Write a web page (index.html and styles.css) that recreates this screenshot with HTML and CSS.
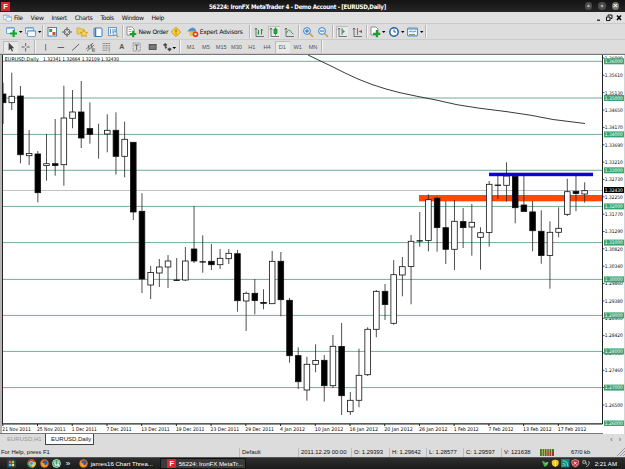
FILE: index.html
```html
<!DOCTYPE html>
<html lang="en">
<head>
  <meta charset="UTF-8">
  <meta name="viewport" content="width=device-width, initial-scale=1.0">
  <title>56224: IronFX MetaTrader 4 - Demo Account - [EURUSD,Daily]</title>
  <link rel="stylesheet" href="styles.css">
</head>
<body>
  <!-- shared icon pieces -->
  <svg class="defs" width="0" height="0">
    <symbol id="plus" viewBox="0 0 8 8"><path d="M3 0h2.4v2.8H8v2.4H5.4V8H3V5.2H0V2.8h3z" fill="#12a32a"/></symbol>
    <symbol id="win" viewBox="0 0 10 8"><rect x=".5" y=".5" width="9" height="7" rx=".7" fill="#f4f9ff" stroke="#5b8fc4"/><path d="M1 1.5h8" stroke="#7fb0de"/></symbol>
    <symbol id="fox" viewBox="0 0 10 10"><circle cx="5" cy="5" r="4.7" fill="#e8731a"/><circle cx="5.6" cy="4" r="2.7" fill="#2c5ea8"/><path d="M1 2q1 3 4 3q-1 2 3 2.400q-3 2.500-6 0z" fill="#f7a331"/></symbol>
  </svg>

  <header class="titlebar">
    <span class="logo">F</span>
    <h1>56224: IronFX MetaTrader 4 - Demo Account - [EURUSD,Daily]</h1>
    <div class="win-buttons"><i></i><i></i><i class="close">×</i></div>
  </header>

  <nav class="menubar">
    <svg class="menu-icon" viewBox="0 0 10 8"><use href="#win" width="7" height="6"/><use href="#win" x="3" y="2" width="7" height="6"/></svg>
    <span>File</span><span>View</span><span>Insert</span><span>Charts</span><span>Tools</span><span>Window</span><span>Help</span>
    <svg class="mdi" viewBox="0 0 26 8"><path d="M1 6.200h3" stroke="#111" stroke-width="1.200"/><path d="M12 2.500V1h4v3.500h-1.500M10.500 3h3.500v3.500h-3.500z" fill="none" stroke="#111"/><path d="M21 1.500l4 4.500M25 1.500l-4 4.500" stroke="#000" stroke-width="1.400"/></svg>
  </nav>

  <div class="toolbar main">
    <svg class="icon drop" viewBox="0 0 18 12"><use href="#win" x="1" y="1" width="9" height="7"/><use href="#plus" x="5" y="4" width="7" height="7"/><path d="M14 5h3.500l-1.750 2z"/></svg>
    <svg class="icon drop" viewBox="0 0 18 12"><use href="#win" x="1" y="1" width="9" height="7"/><use href="#win" x="3" y="4" width="9" height="7"/><path d="M14 5h3.500l-1.750 2z"/></svg>
    <i class="sep"></i>
    <svg class="icon" viewBox="0 0 12 12"><rect x="2" y="1.500" width="8.500" height="8.500" fill="#fff" stroke="#4585bb"/><path d="M3.200 3h3v3h-3z" fill="#2da440"/><path d="M6.500 6h3v3h-3z" fill="#d7492b"/></svg>
    <svg class="icon" viewBox="0 0 12 12" fill="none" stroke="#666"><circle cx="6" cy="6" r="3"/><path d="M6 1v4M6 7v4M1 6h4M7 6h4"/></svg>
    <svg class="icon" viewBox="0 0 12 12"><path d="M1 2h3l1 1h3v5H1z" fill="#f3cf57" stroke="#c9982a" stroke-width=".6"/><path d="M8 4l1.200 2.200 2.500.3-1.800 1.700.4 2.500L8 9.500l-2.300 1.200.4-2.500-1.800-1.700 2.500-.3z" fill="#ffd747" stroke="#b98715" stroke-width=".6"/></svg>
    <svg class="icon" viewBox="0 0 12 12"><rect x="2" y="2" width="8" height="8.500" rx="1" fill="#fff" stroke="#3f78b8"/><path d="M3.500 2v8.500" stroke="#3f78b8" stroke-width="1.500"/></svg>
    <svg class="icon" viewBox="0 0 12 12"><rect x="1.500" y="1.500" width="8" height="8" fill="#eef6fd" stroke="#6b9cc9"/><path d="M3.500 3v5M6 3v4M8 3v3" stroke="#4a78a8" stroke-width=".8"/><circle cx="8" cy="7.500" r="2" fill="#cfe6f8" stroke="#5c8fc0" stroke-width=".7"/><path d="M9.300 9l2 2" stroke="#c29a3a" stroke-width="1.300"/></svg>
    <i class="sep"></i>
    <span class="tool order"><svg class="icon" viewBox="0 0 12 12"><path d="M2 1h5l2 2v6H2z" fill="#fff" stroke="#777" stroke-width=".8"/><path d="M3.500 3.500h3M3.500 5.500h3" stroke="#888" stroke-width=".7"/><use href="#plus" x="4.500" y="4.500" width="7" height="7"/></svg>New Order</span>
    <svg class="icon alert" viewBox="0 0 12 12"><path d="M6 1.300L10.700 6 6 10.700 1.300 6z" fill="#fbd232" stroke="#b78c13" stroke-width=".8"/><path d="M6 3.500v3M6 7.500v1" stroke="#73520a"/></svg>
    <span class="tool expert"><svg class="icon" viewBox="0 0 12 12"><path d="M2 5.500h7l-1 4.500H3z" fill="#edc04b"/><path d="M0.500 5.500Q2 2 6 1.500q3 1 3.500 4z" fill="#4b96cf"/><circle cx="8.500" cy="8.200" r="2.800" fill="#dd3b25"/><path d="M7.500 7.200h2v2h-2z" fill="#fff"/></svg>Expert Advisors</span>
    <i class="sep"></i>
    <svg class="icon" viewBox="0 0 12 12" fill="none" stroke="#555" stroke-width=".8"><path d="M3 2v8.500h8M1.800 3.500L3 2l1.200 1.500"/><path d="M5.500 4v4.500M5.500 7h-1M8.500 3v5.500M8.500 4h1.500" stroke="#199b32" stroke-width="1.100"/></svg>
    <svg class="icon pressed" viewBox="0 0 12 12" fill="none" stroke="#555" stroke-width=".8"><path d="M3 2v8.500h8M1.800 3.500L3 2l1.200 1.500"/><path d="M7.500 1.500v8" stroke="#178a2c"/><path d="M6 3h3v4.500H6z" fill="#1fb03b" stroke="#178a2c"/></svg>
    <svg class="icon" viewBox="0 0 12 12" fill="none" stroke="#555" stroke-width=".8"><path d="M3 2v8.500h8M1.800 3.500L3 2l1.200 1.500"/><path d="M3.500 7q2.500-5 4-2t3 3" stroke="#199b32"/></svg>
    <i class="sep"></i>
    <svg class="icon" viewBox="0 0 12 12"><path d="M7.500 7.500l3.500 3.300" stroke="#cfa13a" stroke-width="1.700"/><circle cx="5" cy="5" r="3.400" fill="#e4f3fd" stroke="#3a80c4"/><path d="M3 5h4M5 3v4" stroke="#2765a5"/></svg>
    <svg class="icon" viewBox="0 0 12 12"><path d="M7.500 7.500l3.500 3.300" stroke="#cfa13a" stroke-width="1.700"/><circle cx="5" cy="5" r="3.400" fill="#e4f3fd" stroke="#3a80c4"/><path d="M3 5h4" stroke="#2765a5"/></svg>
    <i class="sep"></i>
    <svg class="icon pressed" viewBox="0 0 12 12" fill="none" stroke="#555" stroke-width=".8"><path d="M3 2v8.500h8M1.800 3.500L3 2l1.200 1.500M6 2v7"/><path d="M6.500 3.500L9 5.500l-2.500 2z" fill="#1fa63a" stroke="none"/></svg>
    <svg class="icon" viewBox="0 0 12 12" fill="none" stroke="#555" stroke-width=".8"><path d="M3 2v8.500h8M1.800 3.500L3 2l1.200 1.500M6.500 2v7"/><path d="M11 4v3L7.500 5.500z" fill="#d33b2c" stroke="none"/></svg>
    <i class="sep"></i>
    <svg class="icon drop" viewBox="0 0 18 12"><path d="M2 1h5l2 2v6H2z" fill="#fff" stroke="#777" stroke-width=".8"/><use href="#plus" x="4" y="4" width="7.500" height="7.500"/><path d="M13 5h3.500l-1.750 2z"/></svg>
    <svg class="icon drop" viewBox="0 0 18 12"><circle cx="6" cy="6" r="4.200" fill="#f3f9ff" stroke="#1e62ae" stroke-width="1.500"/><path d="M6 3.500V6h2" fill="none" stroke="#333" stroke-width=".8"/><path d="M13 5h3.500l-1.750 2z"/></svg>
    <svg class="icon drop" viewBox="0 0 18 12"><use href="#win" x="1" y="1" width="11" height="10"/><path d="M3 6l2-1 2 1 3-1M3 8.500h6" fill="none" stroke="#3c9253" stroke-width=".8"/><path d="M14 5h3.500l-1.750 2z"/></svg>
    <i class="sep"></i>
  </div>

  <div class="toolbar drawing">
    <svg class="cell pressed" viewBox="0 0 15 12"><path d="M5.500 1.500v8l1.900-1.800 1.300 2.800 1.300-.6-1.300-2.700h2.500z" fill="#444"/></svg>
    <svg class="cell" viewBox="0 0 15 12" stroke="#555" stroke-width=".9"><path d="M7.500 2v3M7.500 7v3.500M3.500 6h3M8.500 6h3"/></svg>
    <i class="sep"></i>
    <svg class="cell" viewBox="0 0 15 12" stroke="#666" stroke-width=".9"><path d="M7.500 3v6.500"/></svg>
    <svg class="cell" viewBox="0 0 15 12" stroke="#555" stroke-width=".9"><path d="M4.500 6.500h6.500"/></svg>
    <svg class="cell" viewBox="0 0 15 12" stroke="#555" stroke-width=".9"><path d="M4 9.500L11 3"/></svg>
    <svg class="cell" viewBox="0 0 15 12" stroke="#555" stroke-width=".8" fill="none"><path d="M3 8l7-6M4 10l7-6M5 4l1 4M8 3l1 5M9.500 8h2.500M9.500 10h2.500M9.500 8v2.500"/></svg>
    <svg class="cell" viewBox="0 0 15 12" stroke="#666" stroke-width=".8" stroke-dasharray="1.200 .4"><path d="M3.500 2.500H11M3.500 4.700H11M3.500 7H11M3.500 9.300h4.500M10 8v3"/></svg>
    <b class="cell">A</b>
    <svg class="cell" viewBox="0 0 15 12" fill="none" stroke="#777" stroke-width=".8"><rect x="4" y="2" width="7" height="8" stroke-dasharray="1 .6"/><path d="M5.500 4h4M7.500 4v5" stroke="#444"/></svg>
    <svg class="cell" viewBox="0 0 15 12"><rect x="4" y="3.500" width="7" height="5" fill="#777" stroke="#444" stroke-width=".8"/></svg>
    <svg class="cell wide" viewBox="0 0 20 12"><path d="M3.500 4l2-2 2 2-2 1zM8 8l2 2.500L12 8l-2-1zM5.500 4v3.500l2-1" fill="#444" stroke="#444" stroke-width=".6"/><path d="M13 6h4l-2 2z"/></svg>
    <i class="sep"></i>
    <span class="cell">M1</span><span class="cell">M5</span><span class="cell">M15</span><span class="cell">M30</span><span class="cell">H1</span><span class="cell">H4</span><span class="cell pressed">D1</span><span class="cell">W1</span><span class="cell">MN</span>
    <i class="sep"></i>
  </div>

  <main class="chart-window">
    <svg id="chart" viewBox="2 55 623 379" width="623" height="379"></svg>
  </main>

  <div class="tabs">
    <span class="tab">EURUSD,H1</span>
    <span class="tab active">EURUSD,Daily</span>
    <span class="scroll">‹<em>›</em></span>
  </div>

  <footer class="status">
    <span>For Help, press F1</span>
    <span>Default</span>
    <span>2011.12.29 00:00</span>
    <span>O: 1.29393</span>
    <span>H: 1.29642</span>
    <span>L: 1.28577</span>
    <span>C: 1.29597</span>
    <span>V: 121638</span>
    <span><svg width="14" height="7" viewBox="0 0 14 7"><rect width="14" height="7" fill="#3f7b28"/><path d="M5 2.500h9V7H5z" fill="#9c3a24"/><path d="M2.300 0v7M4.600 0v7M6.900 0v7M9.200 0v7M11.500 0v7" stroke="#e3d594" stroke-width=".7"/></svg></span>
    <span>67/0 kb</span>
    <svg class="grip" viewBox="0 0 8 8" stroke="#999"><path d="M0 8l8-8M3 8l5-5M6 8l2-2"/></svg>
  </footer>

  <div class="taskbar">
    <svg class="start" viewBox="0 0 10 10"><rect width="10" height="10" rx="2" fill="#2a3d55"/><path d="M2 2h2.700v2.700H2z" fill="#ed5b32"/><path d="M5.300 2H8v2.700H5.300z" fill="#8fd04a"/><path d="M2 5.300h2.700V8H2z" fill="#55b4f2"/><path d="M5.300 5.300H8V8H5.300z" fill="#ffe066"/></svg>
    <div class="quick">
      <svg viewBox="0 0 10 10"><circle cx="5" cy="5" r="4.700" fill="#43a447"/><path d="M.8 3A4.700 4.700 0 0 1 9.300 3L5 4z" fill="#df3e2f"/><path d="M9.300 3A4.700 4.700 0 0 1 5 9.700L6 5z" fill="#f6c827"/><circle cx="5" cy="5" r="2.100" fill="#3f83e0" stroke="#fff" stroke-width=".7"/></svg>
      <svg viewBox="0 0 10 10"><use href="#fox"/></svg>
      <svg viewBox="0 0 10 10"><circle cx="5" cy="5" r="4.400" fill="#35a66b" stroke="#d9efe3" stroke-width=".9"/><path d="M3.300 2.500v3q0 1.500 1.700 1.500t1.700-1.500v-3M6.700 6l1 1.500" fill="none" stroke="#fff" stroke-width="1.200"/></svg>
      <span>»</span>
    </div>
    <div class="task"><svg viewBox="0 0 10 10"><use href="#fox"/></svg>james16 Chart Threa...</div>
    <div class="task current"><span class="logo">F</span>56224: IronFX MetaTr...</div>
    <div class="tray">
      <svg viewBox="0 0 10 10"><path d="M1 2l3 1 1 2 4-1-2 4-3 1z" fill="#47b64d"/><path d="M5 5l3-1" stroke="#ddd"/></svg>
      <svg viewBox="0 0 10 10"><path d="M5 .5l4 1.500v3q0 3-4 4.500Q1 8 1 5V2z" fill="#f4c81c"/><path d="M5 3v2.500M5 6.500v1.200" stroke="#fff" stroke-width="1.200"/></svg>
      <svg viewBox="0 0 10 10"><rect width="10" height="10" fill="#16808d"/><path d="M2 8q0-1 1 0M2 5q3 0 3 3.500M2 2q6 0 6 6.500" fill="none" stroke="#7dde85" stroke-width="1.200"/></svg>
      <svg viewBox="0 0 10 10"><path d="M5 .5l4 1.500v3q0 3-4 4.500Q1 8 1 5V2z" fill="#d92f3c" stroke="#eee" stroke-width=".6"/><path d="M3.500 3.500l3 3M6.500 3.500l-3 3" stroke="#fff"/></svg>
      <svg class="plug" viewBox="0 0 10 10"><path d="M1 2h3v3H1zM5 4v3M7 3l2 1-2 4-2 1" fill="none" stroke="#bbb"/></svg>
      <time>2:21 AM</time>
    </div>
  </div>

  <script src="chart.js"></script>
</body>
</html>
```

FILE: styles.css
```css
* {
  box-sizing: border-box;
}
body {
  margin: 0;
  width: 625px;
  height: 469px;
  overflow: hidden;
  display: flex;
  flex-direction: column;
  background: #dcdcdc;
  font-family: "Liberation Sans", Arial, sans-serif;
  font-size: 6.8px;
  color: #111;
}
.defs {
  position: absolute;
}
svg {
  display: block;
  flex: none;
}

/* title bar */
.titlebar {
  flex: none;
  height: 12px;
  display: flex;
  align-items: center;
  padding: 0 6px 0 1px;
  background: linear-gradient(#141414, #262626);
  color: #fff;
}
.logo {
  flex: none;
  width: 9px;
  height: 9px;
  background: #df2430;
  color: #fff;
  font-size: 7.5px;
  font-weight: bold;
  line-height: 9px;
  text-align: center;
}
.titlebar h1 {
  flex: 1;
  margin: 0 0 0 199px;
  font-family: "DejaVu Sans Condensed", "DejaVu Sans", sans-serif;
  font-stretch: condensed;
  font-size: 6.2px;
  letter-spacing: -0.3px;
  white-space: nowrap;
}
.win-buttons {
  display: flex;
  gap: 6px;
}
.win-buttons i {
  width: 7.5px;
  height: 7.5px;
  border-radius: 50%;
  background: radial-gradient(#aaa 18%, #4c4c4c 30%);
}
.win-buttons .close {
  background: #777;
  font: bold 8px/7px "Liberation Sans", sans-serif;
  text-align: center;
}

/* menu */
.menubar {
  flex: none;
  height: 12px;
  display: flex;
  align-items: center;
  gap: 7.9px;
  padding: 0 3px;
  background: #e0e0e0;
  border-bottom: 1px solid #cacaca;
  font-family: "DejaVu Sans", sans-serif;
  font-size: 6.1px;
  letter-spacing: -0.35px;
}
.menu-icon {
  width: 9px;
  height: 8px;
  margin-right: -6px;
}
.mdi {
  width: 26px;
  height: 8px;
  margin-left: auto;
}

/* toolbars */
.toolbar {
  flex: none;
  display: flex;
  align-items: center;
  border-bottom: 1px solid #cbcbcb;
  background: #dddddd;
}
.main {
  height: 16px;
  padding-left: 5px;
}
.icon {
  width: 12px;
  height: 12px;
  margin-right: 3.2px;
}
.drop {
  width: 18px;
  margin-right: 0.5px;
}
.sep {
  flex: none;
  width: 2px;
  height: 13px;
  border-left: 1px solid #b5b5b5;
  border-right: 1px solid #f4f4f4;
  margin-right: 1.5px;
}
.main .sep:first-of-type {
  margin-right: 2px;
}
.tool {
  display: flex;
  align-items: center;
  white-space: nowrap;
  font-family: "DejaVu Sans", sans-serif;
  font-size: 6.1px;
  letter-spacing: -0.32px;
}
.tool .icon {
  margin-right: 1px;
}
.order {
  width: 45px;
}
.expert {
  width: 62.5px;
  margin-left: 1px;
}
.pressed {
  background: #e9e9e9;
  box-shadow: inset 1px 1px #bcbcbc;
}
.drawing {
  height: 14px;
  padding-left: 3px;
  color: #555;
}
.cell {
  flex: none;
  width: 15.3px;
  height: 12px;
  line-height: 12px;
  font-size: 5.6px;
  text-align: center;
}
b.cell {
  font-size: 7px;
}
.wide {
  width: 19px;
}
.drawing .sep {
  margin-right: 2px;
}

/* chart */
.chart-window {
  flex: none;
  height: 380px;
  padding-left: 2px;
  background: linear-gradient(90deg, #b5b5b5 2px, #fff 2px);
  border-top: 1px solid #777;
  border-bottom: 1px solid #777;
}
#chart {
  font-family: "DejaVu Sans Condensed", "DejaVu Sans", sans-serif;
  font-stretch: condensed;
  font-size: 5.2px;
}
.price {
  font-size: 4.9px;
}
.grid-line {
  stroke: #4f987b;
  stroke-width: 0.8;
}
.wick {
  stroke: #222;
  stroke-width: 0.8;
}
.body {
  stroke: #111;
  stroke-width: 0.8;
}

/* tabs */
.tabs {
  flex: none;
  height: 13px;
  display: flex;
  align-items: flex-start;
  font-size: 6px;
}
.tab {
  width: 45px;
  height: 11px;
  padding-left: 7px;
  line-height: 11px;
  color: #999;
  white-space: nowrap;
}
.active {
  width: 49px;
  padding-left: 5px;
  background: #fff;
  border: 1px solid #444;
  border-top: 0;
  color: #111;
}
.scroll {
  margin: 2px 4px 0 auto;
  font-size: 7px;
  color: #555;
}
.scroll em {
  font-style: normal;
  margin-left: 6px;
}

/* status bar */
.status {
  flex: none;
  height: 10px;
  display: grid;
  grid-template-columns: 239px 59px 53px 38px 37px 37px 38px 37px 32px 47px 8px;
  align-items: center;
  line-height: 9px;
  font-size: 5.9px;
}
.status span {
  height: 9px;
  padding-left: 2px;
  border-left: 1px solid #bbb;
  white-space: nowrap;
}
.status span:first-child,
.status span:nth-child(10) {
  padding-left: 1px;
  border: 0;
}
.status span:nth-child(9) {
  padding-top: 1px;
  border: 0;
}
.grip {
  width: 8px;
  height: 8px;
}

/* taskbar */
.taskbar {
  flex: 1;
  display: flex;
  align-items: center;
  background: linear-gradient(#2d2d2d, #1b1b1b);
  border-top: 1px solid #555;
  padding: 0 8px 0 7px;
  color: #fff;
  font-size: 6.1px;
}
.taskbar svg {
  width: 9px;
  height: 9px;
}
.quick {
  display: flex;
  align-items: center;
  gap: 3.6px;
  margin-left: 11px;
}
.quick span {
  margin-left: 1px;
  font-size: 8px;
  line-height: 8px;
}
.task {
  display: flex;
  align-items: center;
  gap: 2.5px;
  width: 81px;
  height: 11px;
  margin-left: 9px;
  white-space: nowrap;
}
.current {
  width: 86px;
  margin-left: 0;
  padding-left: 6px;
  background: #3a3a3a;
  border: 1px solid #111;
}
.tray {
  display: flex;
  align-items: center;
  gap: 1.6px;
  margin-left: auto;
}
.tray svg {
  width: 8.5px;
  height: 8.5px;
}
.tray time {
  margin-left: 3px;
}
```

FILE: chart.js
```js
const NS = 'http://www.w3.org/2000/svg';
const chart = document.getElementById('chart');

// add an svg element to the chart
function add(tag, attrs, text) {
  const el = document.createElementNS(NS, tag);
  for (const key in attrs) el.setAttribute(key, attrs[key]);
  if (text) el.textContent = text;
  chart.appendChild(el);
  return el;
}

// high, body top, body bottom, low, 1 = down candle, 2 = wick only
const candles = [
  [82.7, 94, 102.7, 124, 1], [72.7, 96.3, 102.7, 110, 0], [86, 96, 154.7, 163.3, 1],
  [130, 153.5, 155.7, 165, 0], [151, 154, 192.7, 202.3, 1], [134, 163.7, 165.5, 180.7, 0],
  [119, 163.7, 165.5, 175.7, 1], [85.7, 118, 164.7, 185.7, 0], [90, 112, 118.3, 128.3, 0],
  [81, 112, 138, 148, 1], [102.3, 128.6, 134.3, 143.7, 1], [123.7, 134, 134, 158.7, 2],
  [114.3, 130.3, 134, 152.3, 0], [112.3, 130.3, 156.3, 174.7, 1], [121.7, 139.3, 156.3, 177.3, 0],
  [142, 142.3, 212, 220, 1], [193.3, 211.3, 279, 293, 1], [266, 272.5, 285, 299, 0],
  [259, 267, 273, 287, 0], [255, 261, 267, 288, 0], [258, 280, 280, 281, 1],
  [247, 261, 280, 281, 0], [206, 249, 261, 263, 1], [235.3, 261.7, 261.7, 272.7, 1],
  [244, 261.3, 264.7, 270, 1], [249, 258.3, 264.7, 269, 0], [249, 253.3, 258.7, 264, 0],
  [250, 253.7, 300.7, 311.7, 1], [291.7, 293.3, 301, 331, 0], [279, 293.3, 300.5, 314.3, 1],
  [289.3, 302.5, 303.3, 309.3, 1], [251, 261.3, 303.7, 304, 0], [252, 261.3, 299.7, 316.3, 1],
  [298, 300.3, 355.7, 362.7, 1], [347.3, 355.6, 381.7, 389, 1], [356.7, 364.3, 390, 400.7, 0],
  [344.3, 360.5, 364.3, 372.3, 0], [355, 360.3, 385.7, 401.7, 1], [335, 346.3, 385.7, 388, 0],
  [323, 346.5, 395.7, 415, 1], [392, 400.3, 411.7, 415, 0], [348.7, 375.3, 400.3, 407.3, 0],
  [327.3, 329.3, 374.7, 376, 0], [290, 291.3, 329.3, 337.3, 0], [284, 291.3, 304.5, 320, 1],
  [260, 274.7, 323.3, 324.7, 0], [257, 266.7, 275, 296.3, 0], [235, 241.3, 266.4, 304.3, 0],
  [212, 240.7, 240.7, 246.7, 1], [194.3, 199.7, 240.5, 251.3, 0], [196.7, 198.2, 227.6, 251.7, 1],
  [201, 227.7, 249.3, 264, 1], [200, 221.3, 249.3, 270, 0], [208, 221.6, 227.6, 248, 1],
  [204, 222.3, 227, 255.7, 0], [227.3, 232.7, 237.3, 269.7, 0], [181, 184.3, 232.5, 246.7, 0],
  [176, 185, 185, 199, 1], [162.3, 176, 185.3, 201.7, 0], [176, 176.3, 207.7, 223.3, 1],
  [176, 205, 211.4, 211.7, 1], [201, 211.9, 230.7, 251.3, 1], [210.3, 231.3, 255.5, 263.7, 1],
  [221.3, 232.3, 255.5, 288.7, 0], [207.3, 228.3, 232.3, 237.3, 0], [178.7, 191.7, 214.3, 216, 0],
  [176, 191.3, 193.4, 211.3, 1], [182.3, 190.7, 194, 202.7, 0]
];

// round price levels
const levels = [61.3, 98, 134.4, 170.3, 206.4, 242.6, 279.4, 315.4, 351.4, 387.6, 423.5];
levels.forEach(y => add('line', { class: 'grid-line', x1: 3, x2: 602, y1: y, y2: y }));

// bid line and resistance zones
add('line', { x1: 3, x2: 602, y1: 190.5, y2: 190.5, stroke: '#bbb', 'stroke-width': 0.9 });
add('rect', { x: 419, y: 195, width: 183, height: 6.3, fill: '#ff4800' });

candles.forEach((c, i) => {
  const x = 3.1 + i * 8.68;
  add('line', { class: 'wick', x1: x, x2: x, y1: c[0], y2: c[3] });
  if (c[4] === 2) return;
  add('rect', {
    class: 'body', x: x - 2.8, y: c[1], width: 5.6, height: c[2] - c[1] || 0.4,
    fill: c[4] ? '#000' : '#fff'
  });
});

add('rect', { x: 489, y: 172.7, width: 104, height: 3.5, fill: '#0505dc' });

// moving average
add('polyline', {
  points: '308,55 331,66 345,73 358,79 372,84.500 386,89 400,92.700 418,96.500 436,100 457,104.700 480,108.300 507,111.700 531,115.300 553,119.500 585,123.500',
  fill: 'none', stroke: '#222', 'stroke-width': 0.9
});

// axes
add('path', { d: 'M2.5 55V424H602.5V55', fill: 'none', stroke: '#222' });
add('path', { d: 'M3 423.500H602', stroke: '#3a6b54', fill: 'none' });
add('rect', { x: 624, y: 55, width: 1, height: 379, fill: '#d5d5d5' });

function price(y, label, color) {
  add('text', { class: 'price', x: 604.8, y: y + 1.8, fill: color, textLength: 18, lengthAdjust: 'spacingAndGlyphs' }, label);
}

['1.36090', '1.35610', '1.35130', '1.34650', '1.34170', '1.33690', '1.33210',
  '1.32730', '1.32250', '1.31770', '1.31290', '1.30820', '1.30340', '1.29860', '1.29380',
  '1.28900', '1.28420', '1.27940', '1.27460', '1.26980', '1.26500'].forEach((label, i) => {
  const y = 58 + i * 17.35;
  add('line', { x1: 602, x2: 604.5, y1: y, y2: y, stroke: '#222', 'stroke-width': 0.8 });
  price(y, label, '#000');
});

// highlighted prices
function tag(y, label, color) {
  add('rect', { x: 604, y: y - 3, width: 20, height: 6, fill: color });
  price(y, label, '#fff');
}
levels.forEach((y, i) => tag(y, (1.36 - i * 0.01).toFixed(5), '#38a473'));
tag(190, '1.32430', '#000');
add('rect', { x: 603, y: 426, width: 21, height: 8, fill: '#fff' });

// dates
['21 Nov 2011', '25 Nov 2011', '1 Dec 2011', '7 Dec 2011', '13 Dec 2011', '19 Dec 2011',
  '23 Dec 2011', '29 Dec 2011', '4 Jan 2012', '10 Jan 2012', '16 Jan 2012', '20 Jan 2012',
  '26 Jan 2012', '1 Feb 2012', '7 Feb 2012', '13 Feb 2012', '17 Feb 2012'].forEach((d, i) => {
  const x = 2.8 + i * 34.72;
  add('line', { x1: x, x2: x, y1: 424, y2: 426, stroke: '#222' });
  add('text', { x: x - 0.5, y: 431.2, textLength: d.length > 10 ? 28.5 : 25, lengthAdjust: 'spacingAndGlyphs' }, d);
});

add('text', { x: 4.8, y: 61.3, textLength: 34, lengthAdjust: 'spacingAndGlyphs' }, 'EURUSD,Daily');
add('text', { x: 43, y: 61.3, textLength: 76, lengthAdjust: 'spacingAndGlyphs' }, '1.32341 1.32664 1.32109 1.32430');
```
